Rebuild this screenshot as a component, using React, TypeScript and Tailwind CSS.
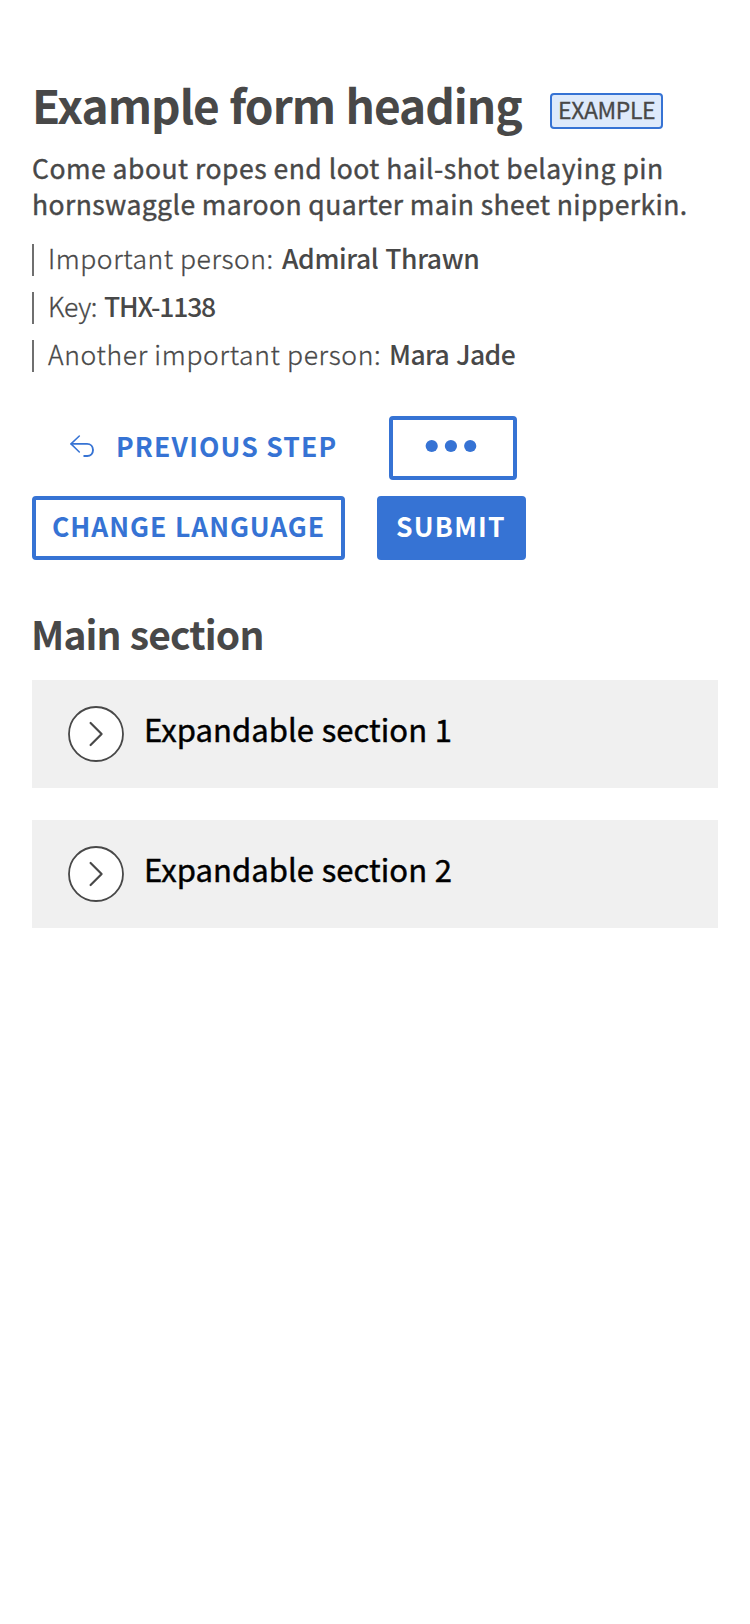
import React from 'react';

const details = [
  { label: 'Important person:', value: 'Admiral Thrawn', labelClass: 'tracking-[0.55px] w-[234px]', valueClass: 'tracking-[-0.4px] [word-spacing:1.5px]' },
  { label: 'Key:', value: 'THX-1138', labelClass: 'tracking-[-0.4px] w-[56px]', valueClass: 'tracking-[-1.21px]' },
  { label: 'Another important person:', value: 'Mara Jade', labelClass: 'tracking-[0.65px] w-[341px]', valueClass: 'tracking-[-0.6px] [word-spacing:1.5px]' },
];

const sections = ['Expandable section 1', 'Expandable section 2'];

function BackIcon() {
  return (
    <svg className="absolute left-[34px] top-[15px]" width="24" height="22" viewBox="0 0 24 22" fill="none" stroke="currentColor" strokeLinecap="round" strokeLinejoin="round">
      <path d="M9.3 1L1 8.9L9.3 17" strokeWidth="1.5" />
      <path d="M1.4 8.9H17C20.6 8.9 23 11.6 23 15C23 18.4 20.6 21 17.2 21H14.2" strokeWidth="1.9" />
    </svg>
  );
}

function ExpandIcon() {
  return (
    <svg className="mt-[26px] shrink-0" width="56" height="56" viewBox="0 0 56 56" fill="none" stroke="#484848" strokeLinecap="round" strokeLinejoin="round">
      <circle cx="28" cy="28" r="27" fill="#fff" strokeWidth="1.8" />
      <path d="M22.6 17L33.6 28L22.6 39" strokeWidth="2.2" />
    </svg>
  );
}

export default function App() {
  return (
    <main className="flex min-h-[1624px] flex-col bg-white px-8 pt-[76px] font-['Noto_Sans_CJK_SC',sans-serif] text-[#484848]">
      <header>
        <div className="flex items-start">
          <h1 className="w-[518px] whitespace-nowrap text-[46px] font-bold leading-[56px] tracking-[-1px] [word-spacing:1px]">Example form heading</h1>
          <span className="mt-[17px] h-9 w-[113px] whitespace-nowrap rounded-[4px] border-2 border-[#3673d4] bg-[#deeafb] pl-1.5 text-[23px] leading-[28px] tracking-[-0.42px] [-webkit-text-stroke:0.3px]">EXAMPLE</span>
        </div>
        <p className="mt-[17.5px] whitespace-nowrap text-[26.5px] leading-9 [-webkit-text-stroke:0.4px]">
          <span className="tracking-[0.5px]">Come about ropes end loot hail-shot belaying pin</span>
          <br />
          <span className="tracking-[0.41px]">hornswaggle maroon quarter main sheet nipperkin.</span>
        </p>
        <ul className="mt-[22.5px] flex flex-col gap-4 text-[26.5px] leading-[27px]">
          {details.map((d) => (
            <li key={d.label} className="flex h-8 whitespace-nowrap border-l-2 border-[#6f6f6f] pl-[14px]">
              <span className={`font-light [-webkit-text-stroke:0.3px] ${d.labelClass}`}>{d.label}</span>
              <span className={`font-medium ${d.valueClass}`}>{d.value}</span>
            </li>
          ))}
        </ul>
      </header>

      <div className="mt-11 flex flex-col gap-4 whitespace-nowrap text-[26.5px] font-bold leading-[51px]">
        <div className="flex">
          <button className="relative flex h-16 w-[357px] border-4 border-transparent pl-[80px] tracking-[1.17px] text-[#3673d4]">
            <BackIcon />
            <span>PREVIOUS STEP</span>
          </button>
          <button aria-label="More actions" className="flex h-16 w-32 rounded-[4px] border-4 border-[#3673d4] pl-8 pt-5 text-[#3673d4]">
            <svg width="52" height="12" viewBox="0 0 52 12" fill="currentColor" overflow="visible">
              <circle cx="6.7" cy="6" r="6.1" />
              <circle cx="25.9" cy="6" r="6.1" />
              <circle cx="45.2" cy="6" r="6.1" />
            </svg>
          </button>
        </div>
        <div className="flex gap-8">
          <button className="flex h-16 w-[313px] rounded-[4px] border-4 border-[#3673d4] pl-4 tracking-[0.93px] text-[#3673d4] [word-spacing:1px]">CHANGE LANGUAGE</button>
          <button className="flex h-16 w-[149px] rounded-[4px] border-4 border-[#3673d4] bg-[#3673d4] pl-[15px] tracking-[1.25px] text-white">SUBMIT</button>
        </div>
      </div>

      <h2 className="-ml-px mt-[49px] text-[39px] font-bold leading-[48px] tracking-[-0.85px] [word-spacing:1px]">Main section</h2>
      <div className="mt-[23px] flex flex-col gap-8">
        {sections.map((title) => (
          <section key={title} className="flex h-[108px] bg-[#f0f0f0] pl-9 text-black">
            <ExpandIcon />
            <h3 className="ml-5 mt-[28px] whitespace-nowrap text-[31px] font-normal leading-[41px] tracking-[0.05px] [word-spacing:0.7px] [-webkit-text-stroke:0.45px]">{title}</h3>
          </section>
        ))}
      </div>
    </main>
  );
}
